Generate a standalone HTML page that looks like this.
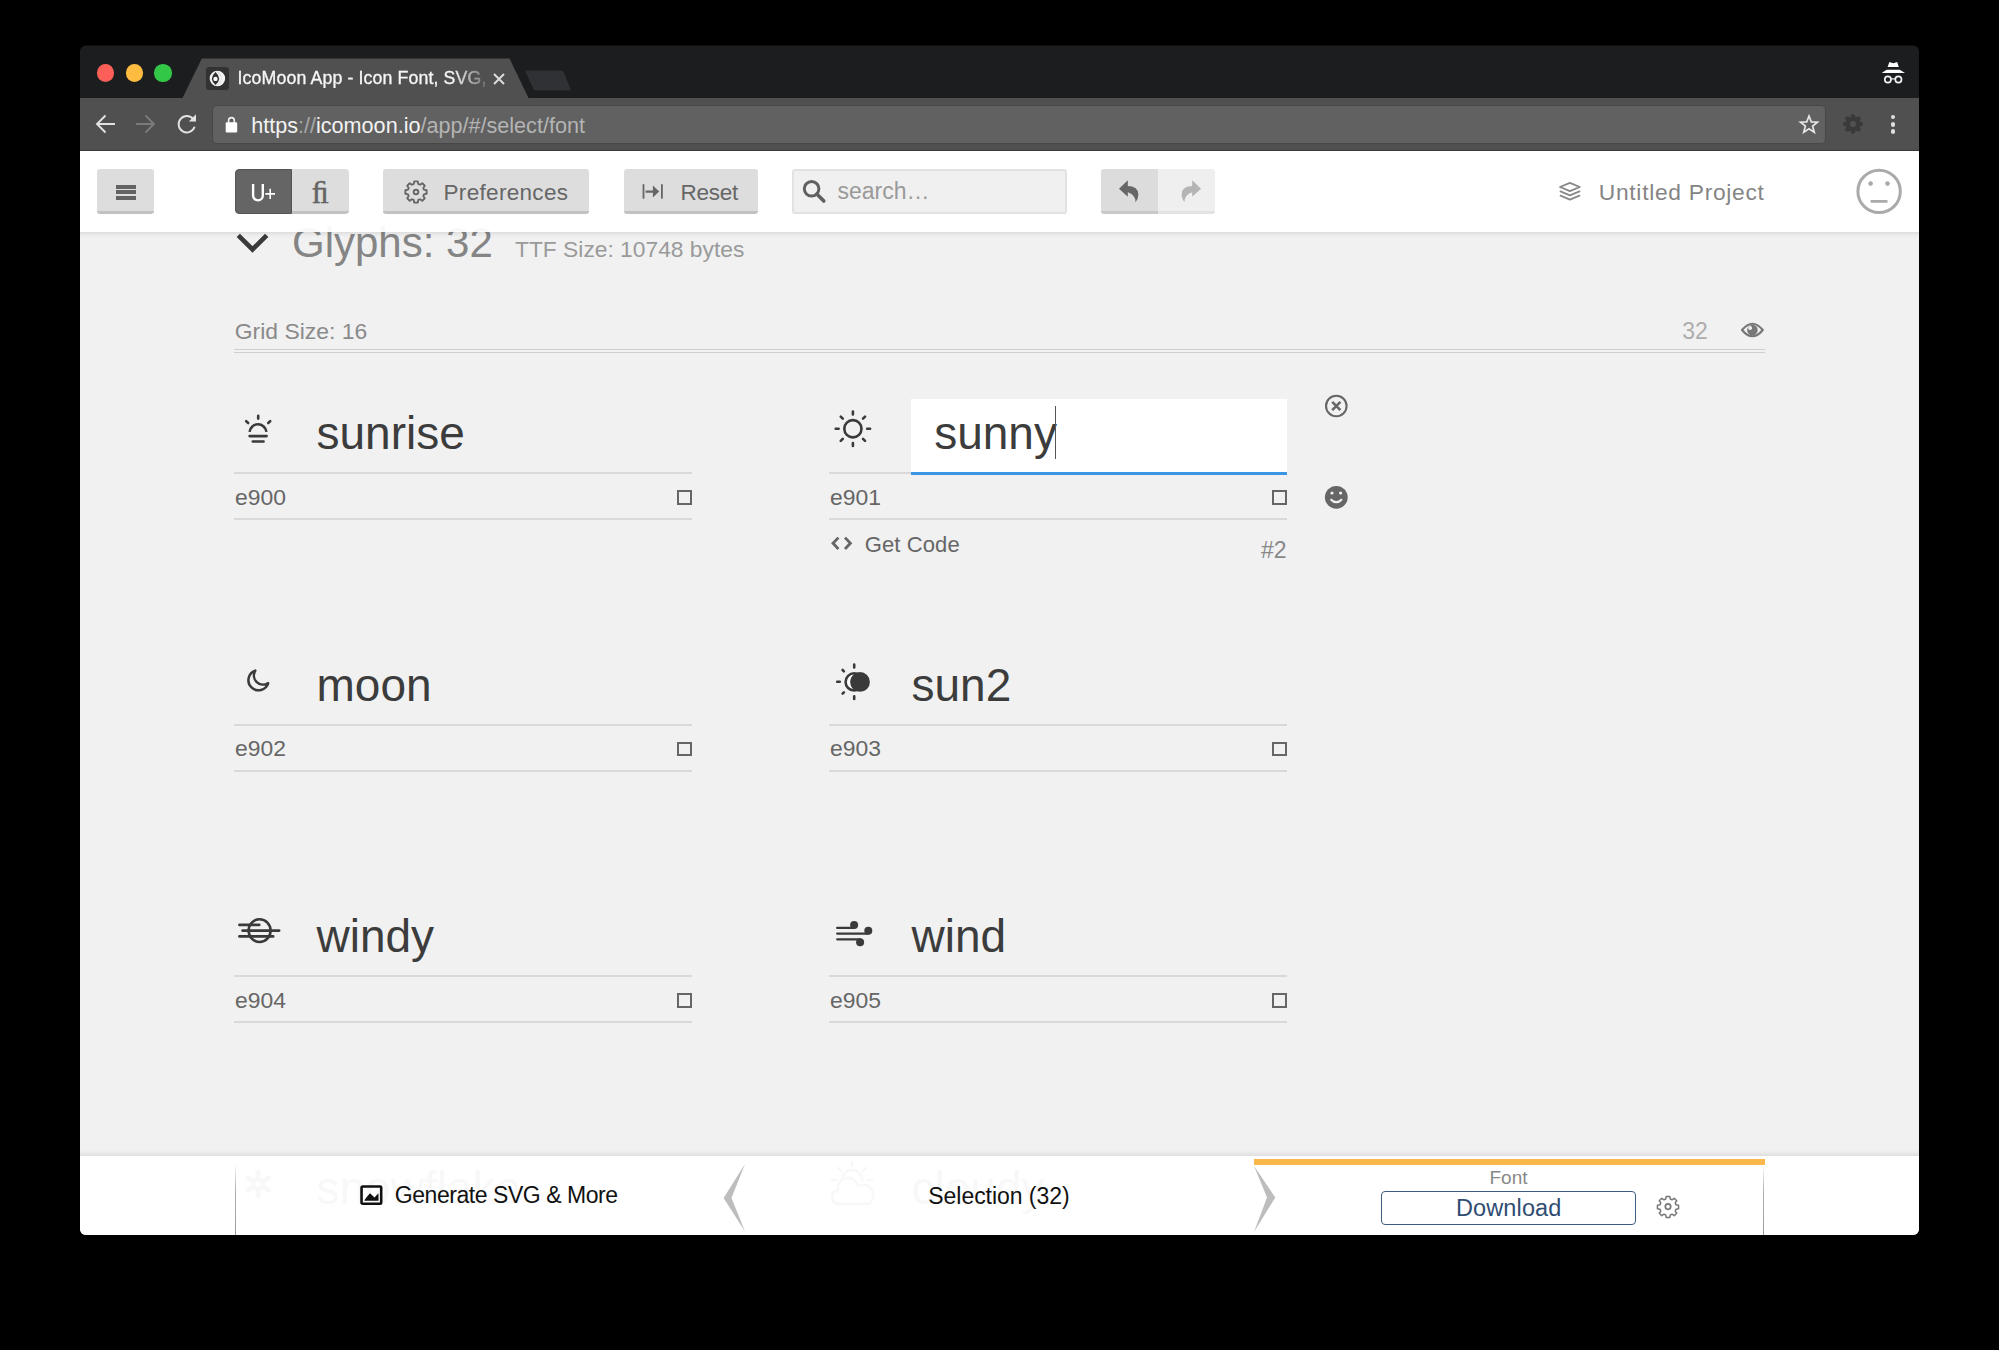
<!DOCTYPE html>
<html><head><meta charset="utf-8">
<style>
*{margin:0;padding:0;box-sizing:border-box}
html,body{width:1999px;height:1350px;background:#000;overflow:hidden}
body{position:relative;font-family:"Liberation Sans",sans-serif}
#win{position:absolute;left:0;top:0;width:1999px;height:1350px;clip-path:inset(45.6px 80px 115px 80px round 6px)}
.a{position:absolute}
.t{position:absolute;line-height:1;white-space:nowrap}
svg{position:absolute;overflow:visible}
</style></head><body>
<div id="win">
  <!-- tab strip -->
  <div class="a" style="left:0;top:0;width:1999px;height:98px;background:#1c1d1f"></div>
  <!-- toolbar -->
  <div class="a" style="left:0;top:98px;width:1999px;height:53px;background:#505050"></div>
  <div class="a" style="left:0;top:150px;width:1999px;height:1px;background:#3c3c3c"></div>
  <!-- traffic lights -->
  <div class="a" style="left:97px;top:64.4px;width:17.2px;height:17.2px;border-radius:50%;background:#fc5f57"></div>
  <div class="a" style="left:125.8px;top:64.4px;width:17.2px;height:17.2px;border-radius:50%;background:#fdbc3f"></div>
  <div class="a" style="left:154.4px;top:64.4px;width:17.2px;height:17.2px;border-radius:50%;background:#33c748"></div>
  <!-- active tab -->
  <svg style="left:0;top:0" width="1999" height="100">
    <path d="M182.5 98 L201.8 58.5 L509.5 58.5 L528.5 98 Z" fill="#505050"/>
    <path d="M527 70.5 L561 70.5 Q563 70.5 564 72.5 L570.5 89 Q571 90.5 569 90.5 L536 90.5 Q534 90.5 533.5 89 L525.5 72 Q525 70.5 527 70.5 Z" fill="#303134"/>
  </svg>
  <!-- favicon -->
  <div class="a" style="left:206px;top:67px;width:23px;height:23px;border-radius:3px;background:#323232"></div>
  <svg style="left:206px;top:67px" width="23" height="23" viewBox="0 0 23 23">
    <circle cx="11.4" cy="11.6" r="7.75" fill="#f4f4f4"/>
    <path d="M9.8 4.1 A7.75 7.75 0 0 1 9.8 19.1 Q20.4 11.6 9.8 4.1 Z" fill="#d2d2d2"/>
    <path d="M9.5 5 Q2.3 11.55 9.5 18.1 Q16.7 11.55 9.5 5 Z" fill="#303030"/>
    <circle cx="9.5" cy="11.9" r="2.2" fill="#fff"/>
  </svg>
  <div class="t" style="left:237.5px;top:70.4px;font-size:17.8px;color:#f6f6f6;letter-spacing:0.1px;-webkit-text-stroke:0.3px #f6f6f6;-webkit-mask-image:linear-gradient(90deg,#000 0,#000 215px,rgba(0,0,0,.15) 250px);">IcoMoon App - Icon Font, SVG,</div>
  <svg style="left:492px;top:73px" width="14" height="12" viewBox="0 0 14 12">
    <path d="M2 1 L12 11 M12 1 L2 11" stroke="#dcdcdc" stroke-width="2" fill="none"/>
  </svg>
  <!-- incognito -->
  <svg style="left:1881px;top:61px" width="25" height="24" viewBox="0 0 25 24">
    <path d="M8.4 1.1 Q11 2.1 12.3 2.2 Q13.6 2.1 16.2 1.1 L17.8 5.9 L6.6 5.9 Z" fill="#fff"/>
    <path d="M5.6 8.8 L18.8 8.8 L24 12.1 L0.7 12.1 Z" fill="#fff"/>
    <circle cx="6.9" cy="18.5" r="3.1" fill="none" stroke="#f2f2f2" stroke-width="1.7"/>
    <circle cx="17.4" cy="18.5" r="3.1" fill="none" stroke="#f2f2f2" stroke-width="1.7"/>
    <path d="M9.8 17.9 L14.5 17.9" stroke="#eee" stroke-width="1.3"/>
  </svg>
  <!-- back/fwd/reload -->
  <svg style="left:94px;top:113px" width="24" height="22" viewBox="0 0 24 22">
    <path d="M3 11 L21 11 M11.5 2.5 L3 11 L11.5 19.5" stroke="#e2e2e2" stroke-width="1.9" fill="none" stroke-linecap="butt"/>
  </svg>
  <svg style="left:133px;top:113px" width="24" height="22" viewBox="0 0 24 22">
    <path d="M3 11 L21 11 M12.5 2.5 L21 11 L12.5 19.5" stroke="#7a7a7a" stroke-width="1.9" fill="none"/>
  </svg>
  <svg style="left:174.5px;top:112px" width="24" height="23" viewBox="0 0 24 23">
    <path d="M18.3 7.2 A8.2 8.2 0 1 0 19.6 14.8" stroke="#e2e2e2" stroke-width="1.9" fill="none"/>
    <path d="M21 2.3 L21 9.5 L13.8 9.5 Z" fill="#e2e2e2"/>
  </svg>
  <!-- url bar -->
  <div class="a" style="left:211.9px;top:105.3px;width:1614.6px;height:38.6px;border-radius:4.5px;background:#616161;border:1.2px solid #474747"></div>
  <svg style="left:224px;top:115px" width="16" height="18" viewBox="0 0 16 18">
    <path d="M4.6 8 L4.6 5.5 A2.85 2.85 0 0 1 10.3 5.5 L10.3 8" stroke="#f0f0f0" stroke-width="1.6" fill="none"/>
    <rect x="1.7" y="7.2" width="11.5" height="10.2" rx="1.2" fill="#fff"/>
  </svg>
  <div class="t" style="left:251.2px;top:114.9px;font-size:21.6px;color:#f2f2f2">https<span style="color:#a8a8a8">://</span>icomoon.io<span style="color:#b4b4b4">/app/#/select/font</span></div>
  <!-- star -->
  <svg style="left:1797px;top:112px" width="24" height="23" viewBox="0 0 24 23">
    <path d="M12 2.2 L14.6 8.9 L21.6 9.2 L16.1 13.6 L18 20.6 L12 16.6 L6 20.6 L7.9 13.6 L2.4 9.2 L9.4 8.9 Z" transform="translate(12 12.2) scale(0.88) translate(-12 -11.5)" stroke="#e6e6e6" stroke-width="1.9" fill="none" stroke-linejoin="miter"/>
  </svg>
  <!-- ext gear -->
  <svg style="left:1841.8px;top:113.2px" width="22" height="22" viewBox="0 0 22 22">
    <path d="M10.21 1.93 L11.79 1.93 L13.30 5.46 L16.85 4.03 L17.97 5.15 L16.54 8.70 L20.07 10.21 L20.07 11.79 L16.54 13.30 L17.97 16.85 L16.85 17.97 L13.30 16.54 L11.79 20.07 L10.21 20.07 L8.70 16.54 L5.15 17.97 L4.03 16.85 L5.46 13.30 L1.93 11.79 L1.93 10.21 L5.46 8.70 L4.03 5.15 L5.15 4.03 L8.70 5.46 Z" fill="#3a3a3a" stroke="#3a3a3a" stroke-width="1.6" stroke-linejoin="round"/>
    <circle cx="11" cy="11" r="5.6" fill="#3a3a3a"/>
    <circle cx="11" cy="11" r="3" fill="#505050"/>
  </svg>
  <!-- menu dots -->
  <div class="a" style="left:1890.8px;top:114.8px;width:4.6px;height:4.6px;border-radius:50%;background:#e0e0e0"></div>
  <div class="a" style="left:1890.8px;top:122px;width:4.6px;height:4.6px;border-radius:50%;background:#e0e0e0"></div>
  <div class="a" style="left:1890.8px;top:129.1px;width:4.6px;height:4.6px;border-radius:50%;background:#e0e0e0"></div>
  <!-- page bg -->
  <div class="a" style="left:0;top:151px;width:1999px;height:1100px;background:#f1f1f1"></div>
  <!-- glyph header -->
  <svg style="left:236px;top:228.5px" width="34" height="30" viewBox="0 0 34 30">
    <path d="M2.3 6.3 L16.5 20.5 L30.7 6.3" stroke="#3a3a3a" stroke-width="4.7" fill="none" stroke-linecap="butt"/>
  </svg>
  <div class="t" style="left:292px;top:221.7px;font-size:42px;color:#858585">Glyphs: 32</div>
  <div class="t" style="left:515px;top:238px;font-size:22.8px;color:#9a9a9a">TTF Size: 10748 bytes</div>
  <div class="t" style="left:234.8px;top:319.6px;font-size:22.9px;color:#8a8a8a">Grid Size: 16</div>
  <div class="t" style="left:1682.3px;top:319.9px;font-size:23px;color:#adadad">32</div>
  <svg style="left:1740px;top:322px" width="26" height="17" viewBox="0 0 26 17">
    <path d="M2 8 Q12.4 -4.5 22.8 8 Q12.4 20.5 2 8 Z" fill="none" stroke="#777" stroke-width="2.2" stroke-linejoin="round"/>
    <circle cx="12.4" cy="8" r="5.3" fill="#777"/>
    <circle cx="10.1" cy="5.9" r="2" fill="#f1f1f1"/>
  </svg>
  <div class="a" style="left:234.3px;top:348.5px;width:1530.7px;height:1.2px;background:#cfcfcf"></div>
  <div class="a" style="left:234.3px;top:351.6px;width:1530.7px;height:1.2px;background:#cfcfcf"></div>
  <!-- row lines -->
  <div class="a" style="left:234.3px;top:472px;width:457.7px;height:2.2px;background:#d9d9d9"></div>
  <div class="a" style="left:234.3px;top:518px;width:457.7px;height:2.2px;background:#d9d9d9"></div>
  <div class="a" style="left:829.3px;top:472px;width:457.7px;height:2.2px;background:#d9d9d9"></div>
  <div class="a" style="left:829.3px;top:518px;width:457.7px;height:2.2px;background:#d9d9d9"></div>
  <div class="a" style="left:234.3px;top:723.7px;width:457.7px;height:2.2px;background:#d9d9d9"></div>
  <div class="a" style="left:234.3px;top:769.7px;width:457.7px;height:2.2px;background:#d9d9d9"></div>
  <div class="a" style="left:829.3px;top:723.7px;width:457.7px;height:2.2px;background:#d9d9d9"></div>
  <div class="a" style="left:829.3px;top:769.7px;width:457.7px;height:2.2px;background:#d9d9d9"></div>
  <div class="a" style="left:234.3px;top:975.2px;width:457.7px;height:2.2px;background:#d9d9d9"></div>
  <div class="a" style="left:234.3px;top:1021.2px;width:457.7px;height:2.2px;background:#d9d9d9"></div>
  <div class="a" style="left:829.3px;top:975.2px;width:457.7px;height:2.2px;background:#d9d9d9"></div>
  <div class="a" style="left:829.3px;top:1021.2px;width:457.7px;height:2.2px;background:#d9d9d9"></div>
  <div class="a" style="left:234.3px;top:1226.5px;width:457.7px;height:2.2px;background:#d9d9d9"></div>
  <div class="a" style="left:829.3px;top:1226.5px;width:457.7px;height:2.2px;background:#d9d9d9"></div>
  <!-- names -->
  <div class="t" style="left:316.5px;top:410.1px;font-size:46px;color:#3c3c3c">sunrise</div>
  <div class="t" style="left:316.5px;top:661.8px;font-size:46px;color:#3c3c3c">moon</div>
  <div class="t" style="left:911.5px;top:661.8px;font-size:46px;color:#3c3c3c">sun2</div>
  <div class="t" style="left:316.5px;top:913.3px;font-size:46px;color:#3c3c3c">windy</div>
  <div class="t" style="left:911.5px;top:913.3px;font-size:46px;color:#3c3c3c">wind</div>
  <div class="t" style="left:316.5px;top:1164.6px;font-size:46px;color:#3c3c3c">snowflake</div>
  <div class="t" style="left:911.5px;top:1164.6px;font-size:46px;color:#3c3c3c">cloudy</div>
  <!-- codes -->
  <div class="t" style="left:235px;top:485.72px;font-size:22.9px;color:#666">e900</div>
  <div class="t" style="left:830px;top:485.72px;font-size:22.9px;color:#666">e901</div>
  <div class="t" style="left:235px;top:737.42px;font-size:22.9px;color:#666">e902</div>
  <div class="t" style="left:830px;top:737.42px;font-size:22.9px;color:#666">e903</div>
  <div class="t" style="left:235px;top:988.92px;font-size:22.9px;color:#666">e904</div>
  <div class="t" style="left:830px;top:988.92px;font-size:22.9px;color:#666">e905</div>
  <!-- checkboxes -->
  <div class="a" style="left:676.5px;top:489.8px;width:15.3px;height:14.8px;border:2.1px solid #666"></div>
  <div class="a" style="left:1271.5px;top:489.8px;width:15.3px;height:14.8px;border:2.1px solid #666"></div>
  <div class="a" style="left:676.5px;top:741.5px;width:15.3px;height:14.8px;border:2.1px solid #666"></div>
  <div class="a" style="left:1271.5px;top:741.5px;width:15.3px;height:14.8px;border:2.1px solid #666"></div>
  <div class="a" style="left:676.5px;top:993px;width:15.3px;height:14.8px;border:2.1px solid #666"></div>
  <div class="a" style="left:1271.5px;top:993px;width:15.3px;height:14.8px;border:2.1px solid #666"></div>
  <!-- sunny input -->
  <div class="a" style="left:911px;top:399px;width:376px;height:73px;background:#fff"></div>
  <div class="a" style="left:911px;top:471.7px;width:376px;height:2.9px;background:#3b97e3"></div>
  <div class="t" style="left:934.2px;top:410.1px;font-size:46px;color:#3c3c3c">sunny</div>
  <div class="a" style="left:1055px;top:406px;width:1.4px;height:52.7px;background:#555"></div>
  <!-- get code -->
  <svg style="left:830px;top:535px" width="24" height="17" viewBox="0 0 24 17">
    <path d="M8.4 2.6 L3 8.3 L8.4 14 M15 2.6 L20.4 8.3 L15 14" stroke="#666" stroke-width="2.8" fill="none"/>
  </svg>
  <div class="t" style="left:864.8px;top:534.1px;font-size:22px;letter-spacing:0.1px;color:#666">Get Code</div>
  <div class="t" style="left:1261px;top:538.5px;font-size:23px;color:#888">#2</div>
  <!-- close / smile -->
  <svg style="left:1320px;top:390px" width="32" height="125" viewBox="0 0 32 125">
    <circle cx="16.3" cy="16" r="10.3" fill="none" stroke="#666" stroke-width="2.1"/>
    <path d="M12.2 11.9 L20.4 20.1 M20.4 11.9 L12.2 20.1" stroke="#666" stroke-width="2.6"/>
    <circle cx="16.3" cy="107.3" r="11.4" fill="#666"/>
    <circle cx="12" cy="103" r="1.6" fill="#f1f1f1"/>
    <circle cx="20.6" cy="103" r="1.6" fill="#f1f1f1"/>
    <path d="M10.6 109.2 Q16.3 115.2 22 109.2" stroke="#f1f1f1" stroke-width="2.2" fill="none"/>
  </svg>
  <!-- glyph icons -->
  <svg style="left:0;top:0" width="1999" height="1350" fill="none" stroke="#3a3a3a">
    <!-- sunrise -->
    <g stroke-width="2.6" stroke-linecap="round">
      <path d="M258.2 415.8 L258.2 418.6"/>
      <path d="M246.2 421.2 L248.2 423"/>
      <path d="M270.2 421.2 L268.2 423"/>
      <path d="M249.6 431.8 A8.45 8.45 0 0 1 266.4 431.8" stroke-linecap="butt"/>
      <path d="M249.6 436.1 L266.6 436.1"/>
      <path d="M252.8 441.5 L263.5 441.5"/>
    </g>
    <!-- sun -->
    <g stroke-width="2.6">
      <circle cx="852.9" cy="428.75" r="8.6"/>
      <g stroke-linecap="round">
        <path d="M867.20 428.75 L870.10 428.75 M863.01 438.86 L865.06 440.91 M852.90 443.05 L852.90 445.95 M842.79 438.86 L840.74 440.91 M838.60 428.75 L835.70 428.75 M842.79 418.64 L840.74 416.59 M852.90 414.45 L852.90 411.55 M863.01 418.64 L865.06 416.59"/>
      </g>
    </g>
    <!-- moon -->
    <path d="M255.3 670.6 A10.1 10.1 0 1 0 268.2 683.1 A9.2 9.2 0 0 1 255.3 670.6 Z" stroke-width="2.5" stroke-linejoin="round"/>
    <!-- sun2 -->
    <g stroke-width="2.6" stroke-linecap="round">
      <path d="M854.2 664.6 L854.2 667.5 M854.2 696.3 L854.2 699 M837.2 681.8 L839.8 681.8"/>
      <path d="M842.6 670 L843.9 671.3 M842.6 693.6 L843.9 692.3"/>
      <circle cx="854.2" cy="681.9" r="8.6" fill="#fff"/>
      <circle cx="860" cy="681.9" r="9.9" fill="#3a3a3a" stroke="none"/>
    </g>
    <!-- windy -->
    <g stroke-width="2.6" stroke-linecap="round">
      <ellipse cx="259.6" cy="930.6" rx="11" ry="11.4"/>
      <path d="M239.4 924.9 L259.3 924.9 M242.5 930.6 L279.2 930.6 M239.4 936.4 L273.2 936.4"/>
    </g>
    <!-- wind -->
    <g stroke-width="2.3" stroke-linecap="round">
      <path d="M837.2 927.9 L854 927.9 M837.2 933.6 L868 933.6 M837.2 939.3 L860 939.3"/>
      <circle cx="854.1" cy="924.9" r="4" fill="#3a3a3a" stroke="none"/>
      <circle cx="868.3" cy="930.7" r="4" fill="#3a3a3a" stroke="none"/>
      <circle cx="860.1" cy="942.2" r="4" fill="#3a3a3a" stroke="none"/>
    </g>
    <!-- snowflake -->
    <g fill="#3a3a3a" stroke="none">
      <circle cx="258" cy="1184" r="7"/>
      <rect x="255.5" y="1170" width="5" height="28" rx="2"/>
      <rect x="255.5" y="1170" width="5" height="28" rx="2" transform="rotate(60 258 1184)"/>
      <rect x="255.5" y="1170" width="5" height="28" rx="2" transform="rotate(120 258 1184)"/>
      <circle cx="258" cy="1184" r="2.6" fill="#f1f1f1"/>
    </g>
    <!-- cloudy -->
    <g stroke-width="2.6" stroke-linecap="round">
      <path d="M852 1162 L852 1166 M838 1168 L841 1171 M866 1168 L863 1171 M832 1180 L836 1180 M868 1180 L872 1180"/>
      <path d="M842 1180 A10 10 0 0 1 862 1180"/>
      <path d="M840 1204 A7 7 0 0 1 838 1190 A10 10 0 0 1 858 1186 A8 8 0 0 1 868 1204 Z"/>
    </g>
  </svg>
  <!-- app header -->
  <div class="a" style="left:0;top:151px;width:1999px;height:81px;background:rgba(255,255,255,0.94);box-shadow:0 1px 5px rgba(0,0,0,0.12)"></div>
  <!-- hamburger -->
  <div class="a" style="left:97.3px;top:169px;width:56.7px;height:44.7px;border-radius:3px;background:#dddddd;border-bottom:3px solid #c2c2c2"></div>
  <div class="a" style="left:116px;top:184.6px;width:20px;height:4.1px;background:#636363"></div>
  <div class="a" style="left:116px;top:190.3px;width:20px;height:3.8px;background:#636363"></div>
  <div class="a" style="left:116px;top:196px;width:20px;height:3.9px;background:#636363"></div>
  <!-- U+ / fi -->
  <div class="a" style="left:234.5px;top:169px;width:57.5px;height:45px;border-radius:4px 0 0 4px;background:#656565;border:1px solid #555;border-right:1.2px solid #555"></div>
  <div class="a" style="left:292px;top:169px;width:56.5px;height:45px;border-radius:0 4px 4px 0;background:#dddddd;border-bottom:3px solid #c2c2c2"></div>
  <svg style="left:248px;top:182px" width="30" height="22" viewBox="0 0 30 22">
    <path d="M5.1 2 L5.1 13.5 A4.85 4.85 0 0 0 14.8 13.5 L14.8 2" fill="none" stroke="#fff" stroke-width="2.4"/>
    <path d="M17.3 11.9 L27 11.9 M22.2 6.75 L22.2 17" stroke="#fff" stroke-width="1.6"/>
  </svg>
  <div class="t" style="left:311.8px;top:177.5px;font-size:30.5px;color:#646464;-webkit-text-stroke:0.5px #646464;font-family:'Liberation Serif',serif">&#xFB01;</div>
  <!-- preferences -->
  <div class="a" style="left:383.4px;top:169px;width:205.2px;height:44.6px;border-radius:3px;background:#dddddd;border-bottom:3px solid #c2c2c2"></div>
  <svg style="left:402.6px;top:178.6px" width="26" height="26" viewBox="0 0 26 26">
    <path d="M11 2.5 L15 2.5 L15.6 5.4 L17.6 6.3 L20.1 4.6 L22.9 7.4 L21.2 9.9 L22 11.9 L25 12.5 L25 13.5 L25 16.5 L22 17.1 L21.2 19.1 L22.9 21.6 L20.1 24.4 L17.6 22.7 L15.6 23.5 L15 26.5 L11 26.5 L10.4 23.5 L8.4 22.7 L5.9 24.4 L3.1 21.6 L4.8 19.1 L4 17.1 L1 16.5 L1 12.5 L4 11.9 L4.8 9.9 L3.1 7.4 L5.9 4.6 L8.4 6.3 L10.4 5.4 Z" transform="translate(13 13) scale(0.885) translate(-13 -14.5)" fill="none" stroke="#666" stroke-width="2.1" stroke-linejoin="round"/>
    <circle cx="13" cy="13" r="2.3" fill="none" stroke="#666" stroke-width="1.9"/>
  </svg>
  <div class="t" style="left:443.5px;top:182px;font-size:22.5px;color:#666;letter-spacing:0.32px">Preferences</div>
  <!-- reset -->
  <div class="a" style="left:623.6px;top:169px;width:134px;height:44.6px;border-radius:3px;background:#dddddd;border-bottom:3px solid #c2c2c2"></div>
  <svg style="left:640px;top:183px" width="26" height="20" viewBox="0 0 26 20">
    <path d="M3.5 2 L3.5 14.9 M21.9 2 L21.9 14.9" stroke="#666" stroke-width="1.8" stroke-linecap="round"/>
    <path d="M5.6 8.6 L14 8.6" stroke="#666" stroke-width="2.4"/>
    <path d="M12.9 2.6 L19.2 8.6 L12.9 14.6 Z" fill="#666"/>
  </svg>
  <div class="t" style="left:680.5px;top:182px;font-size:22.5px;color:#666;letter-spacing:-0.25px">Reset</div>
  <!-- search -->
  <div class="a" style="left:792.4px;top:169px;width:274.2px;height:44.7px;border-radius:3px;background:#f0f0f0;border:2px solid #e2e2e2"></div>
  <svg style="left:800px;top:177px" width="30" height="28" viewBox="0 0 30 28">
    <circle cx="11.6" cy="11.8" r="7.3" fill="none" stroke="#606060" stroke-width="3"/>
    <path d="M16.8 17 L23.8 24" stroke="#606060" stroke-width="3.6" stroke-linecap="round"/>
  </svg>
  <div class="t" style="left:837.5px;top:180.2px;font-size:23px;color:#9a9a9a">search&#8230;</div>
  <!-- undo redo -->
  <div class="a" style="left:1101.4px;top:169px;width:56.6px;height:44.7px;border-radius:3px 0 0 3px;background:#dcdcdc;border-bottom:3px solid #c8c8c8"></div>
  <div class="a" style="left:1158px;top:169px;width:57px;height:44.7px;border-radius:0 3px 3px 0;background:#efefef;border-bottom:3px solid #e3e3e3"></div>
  <svg style="left:1115px;top:178px" width="30" height="28" viewBox="0 0 30 28">
    <path d="M12.8 2.3 L4 10.7 L12.8 18.8 Z" fill="#666"/>
    <path d="M9.5 8 L12.4 8 Q23.5 8 23.4 16.8 Q23.2 21.3 20.5 24.2 Q21 17.2 12.4 14 L9.5 14 Z" fill="#666"/>
  </svg>
  <svg style="left:1173px;top:178px" width="30" height="28" viewBox="0 0 30 28">
    <path d="M19.2 2.3 L28 10.7 L19.2 18.8 Z" fill="#b4b4b4"/>
    <path d="M22.5 8 L19.6 8 Q8.5 8 8.6 16.8 Q8.8 21.3 11.5 24.2 Q11 17.2 19.6 14 L22.5 14 Z" fill="#b4b4b4"/>
  </svg>
  <!-- project -->
  <svg style="left:1556px;top:179px" width="28" height="24" viewBox="0 0 28 24">
    <path d="M13.9 3.8 L23.8 8 L13.9 12.2 L4 8 Z" fill="none" stroke="#888" stroke-width="1.8" stroke-linejoin="round"/>
    <path d="M4.5 12.4 L13.9 16.3 L23.5 12.4" fill="none" stroke="#888" stroke-width="1.8" stroke-linejoin="round" stroke-linecap="round"/>
    <path d="M4.5 16.6 L13.9 20.6 L23.5 16.6" fill="none" stroke="#888" stroke-width="1.8" stroke-linejoin="round" stroke-linecap="round"/>
  </svg>
  <div class="t" style="left:1598.8px;top:181.3px;font-size:22.8px;color:#858585;letter-spacing:0.7px">Untitled Project</div>
  <svg style="left:1852px;top:165px" width="54" height="54" viewBox="0 0 54 54">
    <circle cx="27.1" cy="26.4" r="21.2" fill="none" stroke="#aaa" stroke-width="3"/>
    <circle cx="18.6" cy="18.6" r="2.3" fill="#aaa"/>
    <circle cx="35.5" cy="18.6" r="2.3" fill="#aaa"/>
    <path d="M18.6 36.4 L35.5 36.4" stroke="#aaa" stroke-width="2.6"/>
  </svg>
  <!-- footer -->
  <div class="a" style="left:0;top:1155.8px;width:1999px;height:120px;background:rgba(255,255,255,0.963);box-shadow:0 -1px 6px rgba(0,0,0,0.12)"></div>
  <div class="a" style="left:235px;top:1163px;width:1.3px;height:73px;background:linear-gradient(rgba(170,170,170,0),#b4b4b4 35%,#999)"></div>
  <div class="a" style="left:1762.6px;top:1165px;width:1.3px;height:71px;background:linear-gradient(rgba(170,170,170,0),#b4b4b4 35%,#999)"></div>
  <svg style="left:358px;top:1183px" width="27" height="25" viewBox="0 0 27 25">
    <rect x="3.55" y="3.55" width="19.65" height="17.15" fill="none" stroke="#111" stroke-width="2.6" rx="1"/>
    <path d="M6.25 17.75 Q7.5 15.2 12 10.25 L16.5 14.5 L20.5 10.25 L20.5 17.75 Z" fill="#111"/>
  </svg>
  <div class="t" style="left:394.8px;top:1184.3px;font-size:23px;color:#111;letter-spacing:-0.45px">Generate SVG &amp; More</div>
  <svg style="left:0;top:1100px" width="1999" height="150">
    <path d="M745 64 L723.6 98 L745 131.5 L731.5 98 Z" fill="#bdbdbd"/>
    <path d="M1254 66 L1275.3 97.5 L1254 132 L1267 97.5 Z" fill="#bdbdbd"/>
  </svg>
  <div class="t" style="left:928.3px;top:1184.6px;font-size:23px;color:#111;letter-spacing:-0.05px">Selection (32)</div>
  <div class="a" style="left:1254px;top:1159px;width:510.6px;height:6px;background:#fbb84a"></div>
  <div class="t" style="left:1489.5px;top:1167.9px;font-size:19px;color:#888">Font</div>
  <div class="a" style="left:1381.2px;top:1191px;width:254.6px;height:33.8px;border:1.8px solid #3f5d83;border-radius:4px;background:#fff"></div>
  <div class="t" style="left:1456px;top:1197.3px;font-size:23.5px;color:#2f4d73;letter-spacing:0.12px">Download</div>
  <svg style="left:1654px;top:1193px" width="28" height="28" viewBox="0 0 28 28">
    <path d="M12 2.5 L16 2.5 L16.6 5.4 L18.6 6.3 L21.1 4.6 L23.9 7.4 L22.2 9.9 L23 11.9 L26 12.5 L26 16.5 L23 17.1 L22.2 19.1 L23.9 21.6 L21.1 24.4 L18.6 22.7 L16.6 23.5 L16 26.5 L12 26.5 L11.4 23.5 L9.4 22.7 L6.9 24.4 L4.1 21.6 L5.8 19.1 L5 17.1 L2 16.5 L2 12.5 L5 11.9 L5.8 9.9 L4.1 7.4 L6.9 4.6 L9.4 6.3 L11.4 5.4 Z" transform="translate(14 14) scale(0.88) translate(-14 -14.5)" fill="none" stroke="#777" stroke-width="1.7" stroke-linejoin="round"/>
    <circle cx="14" cy="13.6" r="2.7" fill="none" stroke="#777" stroke-width="1.7"/>
  </svg>
</div>
</body></html>
